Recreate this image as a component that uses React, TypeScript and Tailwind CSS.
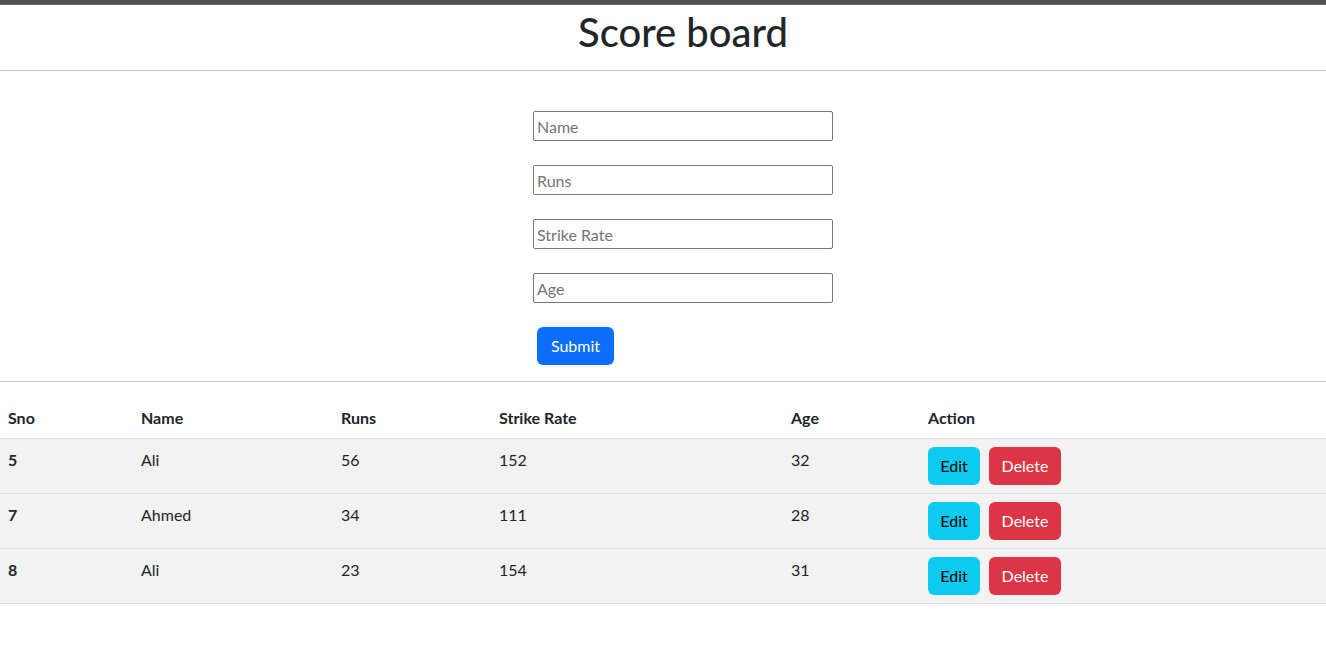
import { useState } from "react";

type Player = {
  sno: number;
  name: string;
  runs: number;
  strikeRate: number;
  age: number;
};

const players: Player[] = [
  { sno: 5, name: "Ali", runs: 56, strikeRate: 152, age: 32 },
  { sno: 7, name: "Ahmed", runs: 34, strikeRate: 111, age: 28 },
  { sno: 8, name: "Ali", runs: 23, strikeRate: 154, age: 31 },
];

const cols = "grid grid-cols-[133px_200px_158px_292px_137px_1fr]";

export default function App() {
  const [form, setForm] = useState({ name: "", runs: "", strikeRate: "", age: "" });

  const fields: { key: keyof typeof form; label: string }[] = [
    { key: "name", label: "Name" },
    { key: "runs", label: "Runs" },
    { key: "strikeRate", label: "Strike Rate" },
    { key: "age", label: "Age" },
  ];

  return (
    <div className="min-h-[657px] bg-white text-[16px] leading-6 text-[#212529] [font-family:Lato,'Noto_Sans',sans-serif]">
      <div className="h-[5px] border-b border-[#6a6a70] bg-[#505057]" />

      <h1 className="flex h-[65px] items-center justify-center pb-[11px] pl-[40px] text-[40px] font-medium leading-[48px]">
        Score board
      </h1>
      <hr className="border-t border-[#c8c8c8]" />

      <form
        className="flex flex-col items-center pl-[40px] pt-[40px]"
        onSubmit={(e) => e.preventDefault()}
      >
        <div className="flex w-[300px] flex-col gap-6">
          {fields.map((f) => (
            <input
              key={f.key}
              value={form[f.key]}
              onChange={(e) => setForm({ ...form, [f.key]: e.target.value })}
              placeholder={f.label}
              className="h-[30px] w-[300px] rounded-[2px] border border-[#767676] px-[3px] text-[16px] outline-none placeholder:text-[#757575]"
            />
          ))}
          <div className="pl-1">
            <button
              type="submit"
              className="h-[38px] w-[77px] rounded-[6px] bg-[#0d6efd] text-[16px] text-white"
            >
              Submit
            </button>
          </div>
        </div>
      </form>

      <hr className="mt-4 border-t border-[#c8c8c8]" />

      <div className="mt-4">
        <div className={`${cols} h-[41px] items-center border-b border-[#dee2e6] font-bold`}>
          <div className="px-2">Sno</div>
          <div className="px-2">Name</div>
          <div className="px-2">Runs</div>
          <div className="px-2">Strike Rate</div>
          <div className="px-2">Age</div>
          <div className="px-2">Action</div>
        </div>
        {players.map((p) => (
          <div key={p.sno} className={`${cols} h-[55px] border-b border-[#dee2e6] bg-[#f2f2f2]`}>
            <div className="p-2 pt-[9px] font-bold">{p.sno}</div>
            <div className="p-2 pt-[9px]">{p.name}</div>
            <div className="p-2 pt-[9px]">{p.runs}</div>
            <div className="p-2 pt-[9px]">{p.strikeRate}</div>
            <div className="p-2 pt-[9px]">{p.age}</div>
            <div className="flex gap-[9px] p-2">
              <button className="h-[38px] w-[52px] rounded-[6px] bg-[#0dcaf0] text-black">Edit</button>
              <button className="h-[38px] w-[72px] rounded-[6px] bg-[#dc3545] text-white">Delete</button>
            </div>
          </div>
        ))}
      </div>
    </div>
  );
}
